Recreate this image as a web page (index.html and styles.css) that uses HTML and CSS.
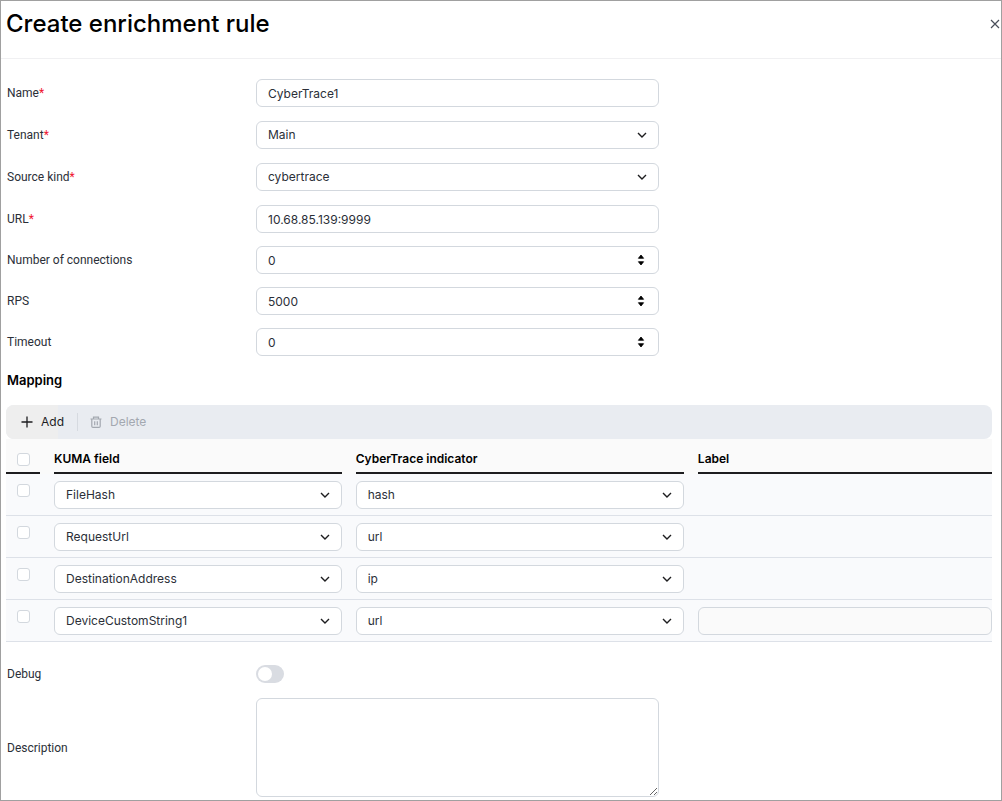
FILE: index.html
```html
<!DOCTYPE html>
<html lang="en">
<head>
<meta charset="utf-8">
<title>Create enrichment rule</title>
<link rel="stylesheet" href="styles.css">
</head>
<body>
<svg class="sprite" aria-hidden="true">
  <symbol id="chevron" viewBox="0 0 10 10"><path d="M1 3l4 4 4-4" fill="none" stroke="currentColor" stroke-width="1.4"/></symbol>
  <symbol id="spin" viewBox="0 0 8 12"><path d="M4 1L6.6 4.3H1.4zM4 11L6.6 7.7H1.4z" fill="currentColor" stroke="currentColor" stroke-width="0.8" stroke-linejoin="round"/></symbol>
</svg>
<main class="panel">
  <header class="panel-header">
    <h1 class="title">Create enrichment rule</h1>
    <button class="close" type="button" aria-label="Close">
      <svg class="close-icon" viewBox="0 0 10 10"><path d="M1 1l8 8M9 1L1 9" fill="none" stroke="currentColor" stroke-width="1.2"/></svg>
    </button>
  </header>
  <form class="form">
    <div class="fields">
      <div class="field">
        <label class="label" for="name">Name<span class="required">*</span></label>
        <input class="control" id="name" type="text" value="CyberTrace1">
      </div>
      <div class="field">
        <label class="label" for="tenant">Tenant<span class="required">*</span></label>
        <div class="picker"><select class="control" id="tenant"><option>Main</option></select><svg class="chevron"><use href="#chevron"/></svg></div>
      </div>
      <div class="field">
        <label class="label" for="kind">Source kind<span class="required">*</span></label>
        <div class="picker"><select class="control" id="kind"><option>cybertrace</option></select><svg class="chevron"><use href="#chevron"/></svg></div>
      </div>
      <div class="field">
        <label class="label" for="url">URL<span class="required">*</span></label>
        <input class="control" id="url" type="text" value="10.68.85.139:9999">
      </div>
    </div>
    <div class="fields fields-limits">
      <div class="field">
        <label class="label" for="connections">Number of connections</label>
        <div class="picker"><input class="control" id="connections" type="number" value="0"><svg class="spin"><use href="#spin"/></svg></div>
      </div>
      <div class="field">
        <label class="label" for="rps">RPS</label>
        <div class="picker"><input class="control" id="rps" type="number" value="5000"><svg class="spin"><use href="#spin"/></svg></div>
      </div>
      <div class="field">
        <label class="label" for="timeout">Timeout</label>
        <div class="picker"><input class="control" id="timeout" type="number" value="0"><svg class="spin"><use href="#spin"/></svg></div>
      </div>
    </div>

    <h2 class="subtitle">Mapping</h2>
    <div class="toolbar">
      <button class="tool tool-add" type="button">
        <svg class="tool-icon" viewBox="0 0 12 12"><path d="M6 0.5v11M0.5 6h11" fill="none" stroke="currentColor" stroke-width="1.3"/></svg>
        Add
      </button>
      <button class="tool tool-delete" type="button" disabled>
        <svg class="tool-icon" viewBox="0 0 12 12"><path d="M0.5 3h11M3.5 3V1.2h5V3M1.8 3v7.2q0 1.2 1.2 1.2h6q1.2 0 1.2-1.2V3M4.7 5.2v4M7.3 5.2v4" fill="none" stroke="currentColor" stroke-width="1.2"/></svg>
        Delete
      </button>
    </div>
    <table class="mapping">
      <colgroup><col class="col-check"><col class="col-field"><col class="col-indicator"><col class="col-label"></colgroup>
      <thead>
        <tr>
          <th scope="col"><div class="heading heading-check"><input class="check" type="checkbox" aria-label="Select all"></div></th>
          <th scope="col"><div class="heading">KUMA field</div></th>
          <th scope="col"><div class="heading">CyberTrace indicator</div></th>
          <th scope="col"><div class="heading">Label</div></th>
        </tr>
      </thead>
      <tbody>
        <tr>
          <td class="cell-check"><input class="check" type="checkbox" aria-label="Select FileHash"></td>
          <td><div class="picker"><select class="control" aria-label="KUMA field"><option>FileHash</option></select><svg class="chevron"><use href="#chevron"/></svg></div></td>
          <td><div class="picker"><select class="control" aria-label="CyberTrace indicator"><option>hash</option></select><svg class="chevron"><use href="#chevron"/></svg></div></td>
          <td></td>
        </tr>
        <tr>
          <td class="cell-check"><input class="check" type="checkbox" aria-label="Select RequestUrl"></td>
          <td><div class="picker"><select class="control" aria-label="KUMA field"><option>RequestUrl</option></select><svg class="chevron"><use href="#chevron"/></svg></div></td>
          <td><div class="picker"><select class="control" aria-label="CyberTrace indicator"><option>url</option></select><svg class="chevron"><use href="#chevron"/></svg></div></td>
          <td></td>
        </tr>
        <tr>
          <td class="cell-check"><input class="check" type="checkbox" aria-label="Select DestinationAddress"></td>
          <td><div class="picker"><select class="control" aria-label="KUMA field"><option>DestinationAddress</option></select><svg class="chevron"><use href="#chevron"/></svg></div></td>
          <td><div class="picker"><select class="control" aria-label="CyberTrace indicator"><option>ip</option></select><svg class="chevron"><use href="#chevron"/></svg></div></td>
          <td></td>
        </tr>
        <tr>
          <td class="cell-check"><input class="check" type="checkbox" aria-label="Select DeviceCustomString1"></td>
          <td><div class="picker"><select class="control" aria-label="KUMA field"><option>DeviceCustomString1</option></select><svg class="chevron"><use href="#chevron"/></svg></div></td>
          <td><div class="picker"><select class="control" aria-label="CyberTrace indicator"><option>url</option></select><svg class="chevron"><use href="#chevron"/></svg></div></td>
          <td><input class="control control-muted" type="text" aria-label="Label"></td>
        </tr>
      </tbody>
    </table>

    <div class="fields fields-extra">
      <div class="field">
        <label class="label" for="debug">Debug</label>
        <input class="toggle" id="debug" type="checkbox" role="switch">
      </div>
      <div class="field">
        <label class="label" for="description">Description</label>
        <textarea class="control control-area" id="description"></textarea>
      </div>
    </div>
  </form>
</main>
</body>
</html>
```
FILE: styles.css
```css
* {
  box-sizing: border-box;
}

body {
  margin: 0;
  background: #fff;
  color: #2b2f38;
  font: 12px/16px Inter, "Liberation Sans", sans-serif;
}

.sprite {
  display: none;
}

.panel {
  min-height: 100vh;
  border: 1px solid #a0a0a0;
}

.panel-header {
  display: flex;
  align-items: center;
  justify-content: space-between;
  padding: 6px 1px 18px 5px;
  border-bottom: 1px solid #f0f0f2;
}

.title {
  margin: 0;
  color: #000;
  font-size: 24px;
  font-weight: 500;
  line-height: 33px;
}

.close {
  display: flex;
  padding: 0;
  border: 0;
  background: none;
  color: #4a4f5a;
}

.close-icon {
  width: 10px;
  height: 10px;
}

.form {
  padding: 20px 9px 3px 5px;
}

.fields {
  display: grid;
  gap: 14px;
}

.fields-limits {
  gap: 13px;
  margin-top: 13px;
}

.field {
  display: grid;
  grid-template-columns: 250fr 403fr 333fr;
  align-items: center;
}

.label {
  font-family: Roboto, "Liberation Sans", sans-serif;
  font-size: 12px;
}

.required {
  color: #f0142f;
}

.control {
  display: block;
  width: 100%;
  height: 28px;
  margin: 0;
  padding: 0 11px;
  border: 1px solid #d3d8de;
  border-radius: 6px;
  background: #fff;
  color: inherit;
  font: inherit;
  appearance: none;
}

.control[type="number"] {
  appearance: textfield;
}

.control-muted {
  background: #fafafa;
}

.control-area {
  height: 99px;
  padding: 6px 11px;
  resize: both;
}

.picker {
  display: grid;
  align-items: center;
}

.picker > * {
  grid-area: 1 / 1;
}

.chevron,
.spin {
  justify-self: end;
  margin-right: 12px;
  color: #1d1d1f;
  pointer-events: none;
}

.chevron {
  width: 10px;
  height: 10px;
}

.spin {
  width: 8px;
  height: 12px;
  margin-right: 14px;
  color: #000;
}

.subtitle,
.label {
  padding-left: 1px;
}

.subtitle {
  margin: 15px 0 16px;
  color: #000;
  font-size: 13px;
  font-weight: 600;
  line-height: 18px;
}

.toolbar {
  display: flex;
  align-items: center;
  overflow: hidden;
  border-radius: 8px;
  background: #e9ecf1;
}

.tool {
  display: flex;
  align-items: center;
  gap: 8px;
  height: 34px;
  padding: 0 14px;
  border: 0;
  background: none;
  color: #1d1d1f;
  font: inherit;
}

.tool-icon {
  width: 12px;
  height: 12px;
}

.tool-add {
  padding: 0 13px 0 15px;
  background: linear-gradient(90deg, #eeeeee 52px, #e9ecf1 52px);
}

.tool-delete {
  height: 18px;
  padding-left: 12px;
  border-left: 1px solid #d6dae0;
  color: #a3a8b0;
}

.mapping {
  width: 100%;
  border-spacing: 0;
  table-layout: fixed;
  background: #f9fafc;
}

.col-check {
  width: 48px;
}

.col-field {
  width: 30.6%;
}

.col-indicator {
  width: 34.7%;
}

.mapping th,
.mapping td {
  padding: 0 14px 0 0;
}

.mapping th {
  background: #fafafa;
  color: #000;
  font-weight: 600;
  text-align: left;
}

.mapping td {
  padding-top: 7px;
  padding-bottom: 6px;
  border-bottom: 1px solid #dde1e8;
}

.mapping th:last-child,
.mapping td:last-child {
  padding-right: 0;
}

.heading {
  height: 35px;
  padding-top: 12px;
  border-bottom: 2px solid #1d1d1f;
}

.heading-check {
  padding: 14px 0 0 11px;
}

.check {
  display: block;
  width: 13px;
  height: 13px;
  margin: 0;
  border: 1px solid #d3d8de;
  border-radius: 3px;
  background: #fff;
  appearance: none;
}

.mapping .cell-check {
  padding-top: 10px;
  padding-left: 11px;
  vertical-align: top;
}

.fields-extra {
  gap: 15px;
  margin-top: 23px;
}

.toggle {
  display: flex;
  align-items: center;
  width: 28px;
  height: 18px;
  margin: 0;
  padding: 2px;
  border-radius: 9px;
  background: #d9dce2;
  appearance: none;
}

.toggle::before {
  width: 14px;
  height: 14px;
  border-radius: 50%;
  background: #fff;
  content: "";
}

.toggle:checked {
  justify-content: flex-end;
}
```
